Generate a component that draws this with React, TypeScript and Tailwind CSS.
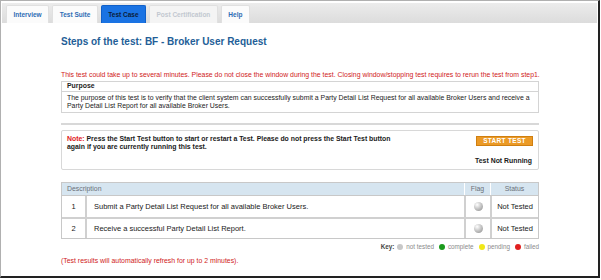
import React from 'react'

const tabs = [
	{ label: 'Interview', state: 'idle' },
	{ label: 'Test Suite', state: 'idle' },
	{ label: 'Test Case', state: 'active' },
	{ label: 'Post Certification', state: 'disabled' },
	{ label: 'Help', state: 'idle' },
]

const steps = [
	'Submit a Party Detail List Request for all available Broker Users.',
	'Receive a successful Party Detail List Report.',
]

function Ball({ size = 'w-[9px] h-[9px]' }: { size?: string }) {
	return (
		<span
			className={`inline-block rounded-full ${size} bg-[radial-gradient(circle_at_35%_30%,#ffffff_0%,#c8c8c8_45%,#8a8a8a_100%)]`}
		/>
	)
}

function Dot({ color }: { color: string }) {
	return <span className={`inline-block w-[6px] h-[6px] rounded-full ${color}`} />
}

export default function App() {
	return (
		<div className="w-[601px] h-[280px] bg-white font-['Liberation_Sans',Arial,sans-serif]">
			<div className="w-[600px] h-[278px] border-l border-t border-[#b0b0b0] border-r-2 border-b-2 border-r-[#222] border-b-[#222] flex flex-col">
				<div className="mx-[1px] mt-[2px] h-[20px] bg-gradient-to-b from-[#ececec] to-[#dcdcdc] flex items-end gap-[3px] pl-[4px]">
					{tabs.map((t) => (
						<div
							key={t.label}
							className={
								'h-[18px] px-[6.5px] flex items-center rounded-t-[2px] text-[6.5px] font-bold border border-b-0 ' +
								(t.state === 'active'
									? 'bg-[#1a73e3] border-[#1060c8] text-[#0b1d3a]'
									: t.state === 'disabled'
									? 'bg-[#f4f4f4] border-[#e0e0e0] text-[#c2c8d0]'
									: 'bg-[#fbfbfb] border-[#e0e0e0] text-[#2f6db5]')
							}
						>
							{t.label}
						</div>
					))}
				</div>

				<div className="pl-[60px] pr-[59px] flex flex-col">
					<h1 className="mt-[13px] text-[10px] font-bold text-[#235e97] leading-[12px]">
						Steps of the test: BF - Broker User Request
					</h1>

					<p className="mt-[23px] text-[6.9px] text-[#d01a1a] leading-[8px] whitespace-nowrap">
						This test could take up to several minutes. Please do not close the window during the test. Closing window/stopping test requires to rerun the test from step1.
					</p>

					<div className="mt-[2px] border border-[#d4d4d4] text-[6.9px] text-[#222]">
						<div className="px-[5px] h-[9px] flex items-center font-bold">Purpose</div>
						<div className="border-t border-[#d4d4d4] px-[5px] pt-[2px] pb-[3px] leading-[7.5px]">
							The purpose of this test is to verify that the client system can successfully submit a Party Detail List Request for all available Broker Users and receive a Party Detail List Report for all available Broker Users.
						</div>
					</div>

					<div className="mt-[10px] h-[2px] bg-[#d8d8d8]" />

					<div className="mt-[5px] h-[40px] border border-[#d8d8d8] rounded-[2px] flex flex-col px-[5px] pt-[3.5px] text-[6.9px] font-bold text-[#1a1a1a]">
						<div className="flex justify-between items-start">
							<div className="w-[338px] flex flex-col leading-[8px]">
								<span>
									<span className="text-[#e02020]">Note:</span> Press the Start Test button to start or restart a Test. Please do not press the Start Test button
								</span>
								<span>again if you are currently running this test.</span>
							</div>
							<div className="mt-[1.5px] w-[57px] h-[10px] bg-[#eb9a26] border border-[#d07f10] text-white text-[6.5px] font-bold flex items-center justify-center tracking-[0.3px]">
								START TEST
							</div>
						</div>
						<div className="mt-auto mb-[3px] text-right pr-[1px]">Test Not Running</div>
					</div>

					<div className="mt-[12px] border border-[#c8c8c8] text-[7.5px]">
						<div className="flex h-[13px] bg-[#d6e5f0] text-[#6a7078] text-[6.9px] border-b border-[#c8c8c8]">
							<div className="flex-1 flex items-center pl-[5px]">Description</div>
							<div className="w-[26px] flex items-center justify-center border-l border-white">Flag</div>
							<div className="w-[48px] flex items-center justify-center border-l border-white">Status</div>
						</div>
						{steps.map((s, i) => (
							<div key={i} className={'flex h-[21px] text-[#1a1a1a] ' + (i > 0 ? 'border-t-2 border-[#d0d0d0]' : '')}>
								<div className="w-[25px] flex items-center justify-center border-r-2 border-[#d0d0d0]">{i + 1}</div>
								<div className="flex-1 flex items-center pl-[7px]">{s}</div>
								<div className="w-[26px] flex items-center justify-center border-l-2 border-[#d0d0d0]">
									<Ball />
								</div>
								<div className="w-[48px] flex items-center justify-center border-l-2 border-[#d0d0d0]">Not Tested</div>
							</div>
						))}
					</div>

					<div className="mt-[3px] flex justify-end items-center gap-[3px] text-[6.3px] text-[#8a8a8a]">
						<span className="font-bold text-[#444]">Key:</span>
						<Dot color="bg-[#c8c8c8]" />
						<span className="mr-[2px]">not tested</span>
						<Dot color="bg-[#1c9a1c]" />
						<span className="mr-[2px]">complete</span>
						<Dot color="bg-[#f0e818]" />
						<span className="mr-[2px]">pending</span>
						<Dot color="bg-[#e02020]" />
						<span>failed</span>
					</div>

					<p className="mt-[5px] text-[6.9px] text-[#d01a1a]">
						(Test results will automatically refresh for up to 2 minutes).
					</p>
				</div>
			</div>
		</div>
	)
}
